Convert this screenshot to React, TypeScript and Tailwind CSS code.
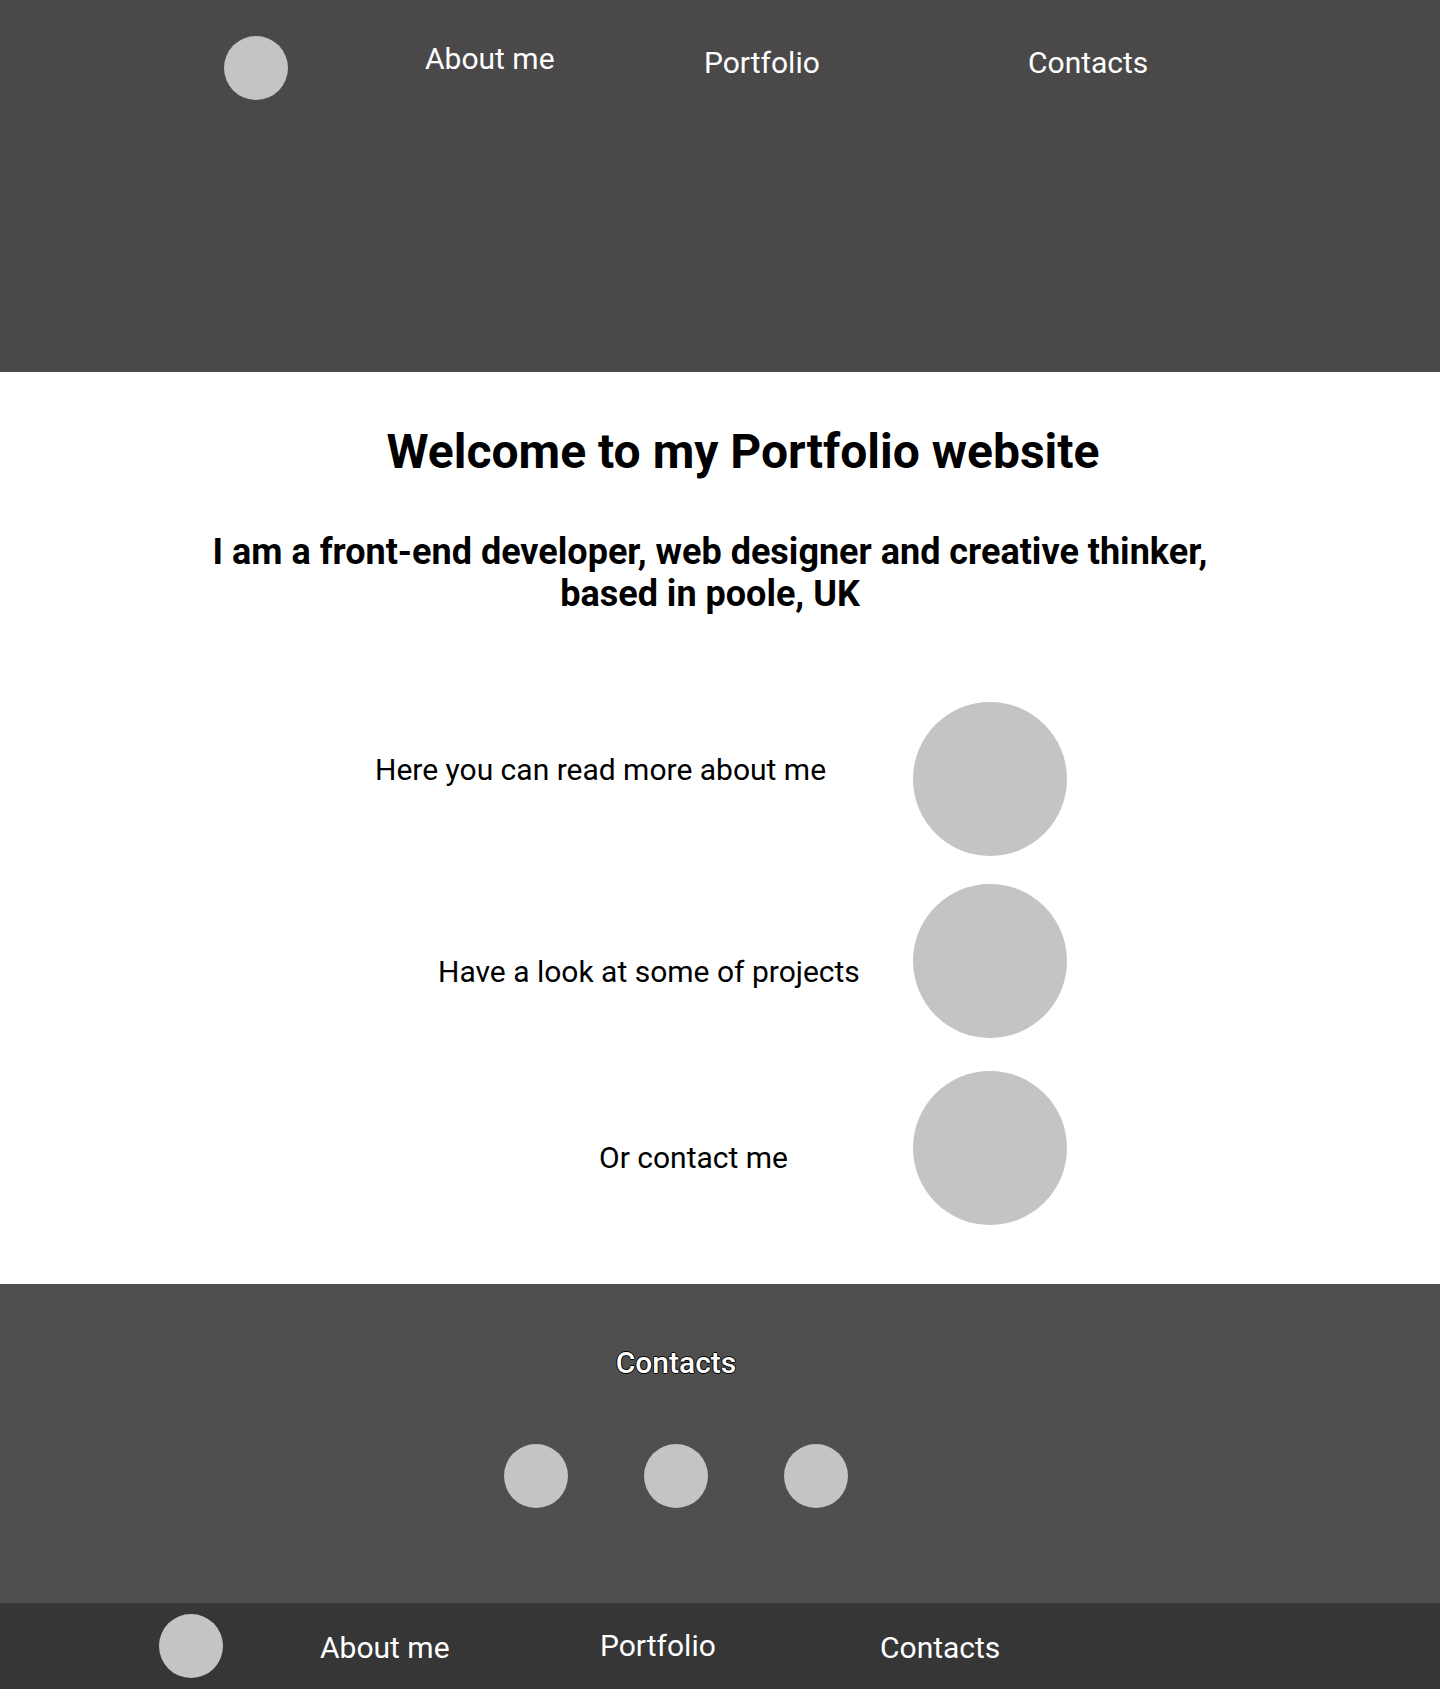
import React from 'react';

const rows = [
  { text: 'Here you can read more about me', textLeft: 'ml-[375px]', textTop: 'mt-[50px]', rowTop: 'mt-[87px]' },
  { text: 'Have a look at some of projects', textLeft: 'ml-[438px]', textTop: 'mt-[70px]', rowTop: 'mt-[28px]' },
  { text: 'Or contact me', textLeft: 'ml-[599px]', textTop: 'mt-[69px]', rowTop: 'mt-[33px]' },
];

function Dot({ className = '' }: { className?: string }) {
  return <div className={`shrink-0 rounded-full bg-[#c4c4c4] ${className}`} />;
}

export default function App() {
  return (
    <div className="min-h-screen bg-white font-['Roboto','Liberation_Sans',sans-serif] text-black">
      {/* top header */}
      <header className="h-[372px] bg-[#4a4849]">
        <nav className="flex items-start pl-[224px] pt-[36px] text-[30px] leading-[35px] text-white">
          <Dot className="h-16 w-16" />
          <a href="#about" className="ml-[137px] mt-[5px] w-[279px]">About me</a>
          <a href="#portfolio" className="mt-[9px] w-[324px]">Portfolio</a>
          <a href="#contacts" className="mt-[9px]">Contacts</a>
        </nav>
      </header>

      <main className="pt-[52px] pb-[59px]">
        <h1 className="pl-[46px] text-center text-[48px] font-bold leading-[56px]">
          Welcome to my Portfolio website
        </h1>
        <h2 className="mt-[51px] pr-[20px] text-center text-[36px] font-bold leading-[42px]">
          I am a front-end developer, web designer and creative thinker,
          <br />
          based in poole, UK
        </h2>

        {rows.map((row) => (
          <div key={row.text} className={`flex items-start ${row.rowTop}`}>
            <div className="w-[913px]">
              <p className={`${row.textLeft} ${row.textTop} whitespace-nowrap text-[30px] leading-[35px]`}>
                {row.text}
              </p>
            </div>
            <Dot className="h-[154px] w-[154px]" />
          </div>
        ))}
      </main>

      {/* contacts footer */}
      <section className="h-[319px] bg-[#504f4d] pt-[61px] pr-[88px]">
        <h3 className="text-center text-[30px] font-medium leading-[35px] text-white [text-shadow:-1px_0_#000,1px_0_#000,0_-1px_#000,0_1px_#000]">
          Contacts
        </h3>
        <div className="mt-[64px] flex justify-center gap-[76px]">
          <Dot className="h-16 w-16" />
          <Dot className="h-16 w-16" />
          <Dot className="h-16 w-16" />
        </div>
      </section>

      <footer className="h-[86px] bg-[#363636]">
        <nav className="flex items-start pl-[159px] pt-[11px] text-[30px] leading-[35px] text-white">
          <Dot className="h-16 w-16" />
          <a href="#about" className="ml-[97px] mt-[16px] w-[280px]">About me</a>
          <a href="#portfolio" className="mt-[14px] w-[280px]">Portfolio</a>
          <a href="#contacts" className="mt-[16px]">Contacts</a>
        </nav>
      </footer>
    </div>
  );
}
